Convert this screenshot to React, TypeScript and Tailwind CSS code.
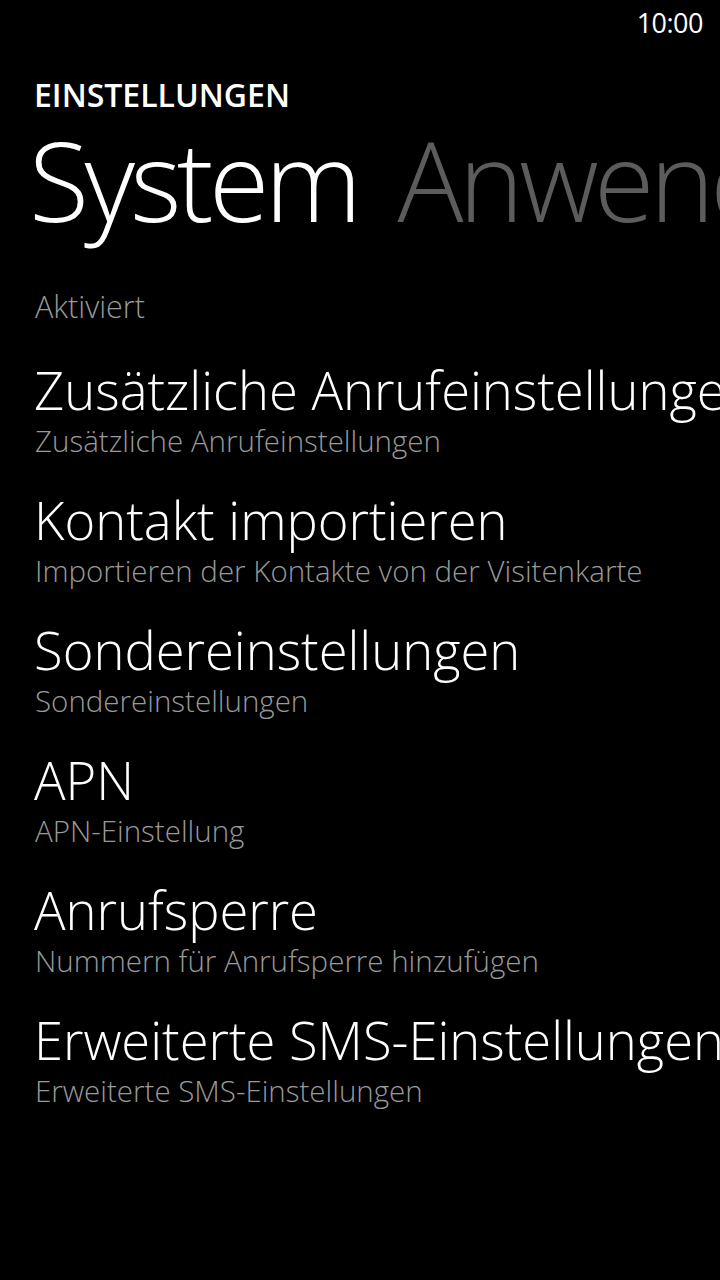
import React from "react"

type SettingItem = {
  title: string
  subtitle: string
}

const items: SettingItem[] = [
  { title: "Zusätzliche Anrufeinstellungen", subtitle: "Zusätzliche Anrufeinstellungen" },
  { title: "Kontakt importieren", subtitle: "Importieren der Kontakte von der Visitenkarte" },
  { title: "Sondereinstellungen", subtitle: "Sondereinstellungen" },
  { title: "APN", subtitle: "APN-Einstellung" },
  { title: "Anrufsperre", subtitle: "Nummern für Anrufsperre hinzufügen" },
  { title: "Erweiterte SMS-Einstellungen", subtitle: "Erweiterte SMS-Einstellungen" },
]

function SettingRow({ title, subtitle }: SettingItem) {
  return (
    <div className="flex flex-col">
      <div className="text-[52.5px] leading-[60px] font-[360] text-white whitespace-nowrap">
        {title}
      </div>
      <div className="mt-[4px] pl-[1px] text-[29.5px] leading-[34px] font-[340] text-[#999999] whitespace-nowrap">
        {subtitle}
      </div>
    </div>
  )
}

export default function App() {
  return (
    <div
      className="w-[720px] h-[1280px] bg-black overflow-hidden text-white"
      style={{ fontFamily: '"Open Sans", "Noto Sans", sans-serif' }}
    >
      {/* status bar */}
      <div className="h-[44px] flex justify-end pr-[17px] pt-[3px]">
        <span className="text-[27px] leading-[40px] font-normal tracking-[-0.5px]">10:00</span>
      </div>

      <div className="pl-[34px] pt-[31px]">
        <div className="text-[32px] leading-[40px] font-semibold">EINSTELLUNGEN</div>

        <div className="mt-[4px] -ml-[5px] flex gap-[40px] whitespace-nowrap text-[110px] leading-[120px] font-light tracking-[-0.042em]">
          <span className="text-white">System</span>
          <span className="text-[#5c5c5c]">Anwendungen</span>
        </div>

        <div className="mt-[50px] pl-[1px] text-[30.5px] leading-[34px] font-[340] text-[#999999]">
          Aktiviert
        </div>

        <div className="mt-[37px] flex flex-col gap-[32px]">
          {items.map((item) => (
            <SettingRow key={item.title} title={item.title} subtitle={item.subtitle} />
          ))}
        </div>
      </div>
    </div>
  )
}
